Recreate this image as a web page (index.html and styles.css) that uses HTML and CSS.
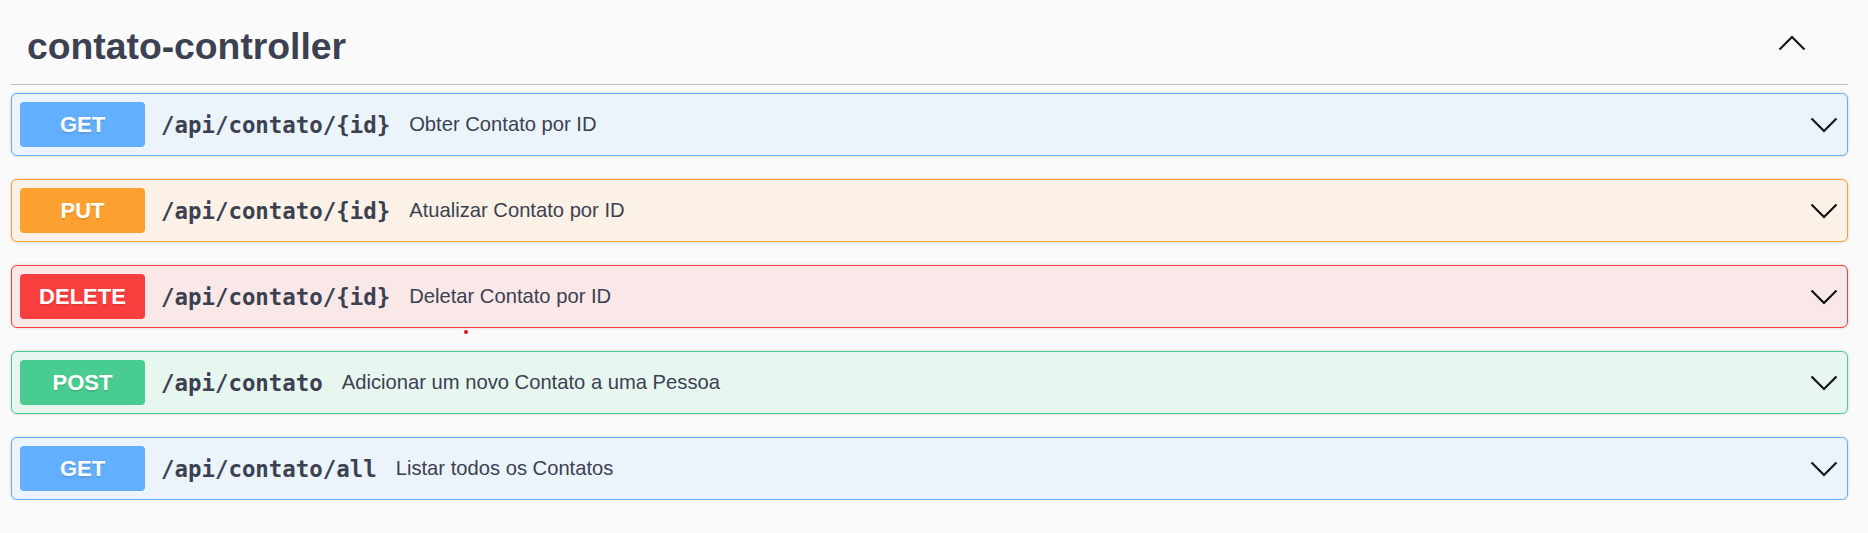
FILE: index.html
```html
<!DOCTYPE html>
<html lang="pt">
<head>
<meta charset="utf-8">
<title>contato-controller</title>
<link rel="stylesheet" href="styles.css">
</head>
<body>
<div class="section">
  <div class="tag-header">
    <h3 class="tag-title">contato-controller</h3>
    <button class="toggle" aria-label="Recolher">
      <svg width="28" height="16" viewBox="0 0 28 16"><polyline points="1.5,14.5 14,2 26.5,14.5" fill="none" stroke="#111" stroke-width="2.2"/></svg>
    </button>
  </div>
  <div class="ops">
    <div class="op op-get">
      <span class="method">GET</span>
      <span class="path">/api/contato/{id}</span>
      <span class="desc">Obter Contato por ID</span>
      <svg class="arrow" width="28" height="16" viewBox="0 0 28 16"><polyline points="1.5,1.5 14,14 26.5,1.5" fill="none" stroke="#111" stroke-width="2.2"/></svg>
    </div>
    <div class="op op-put">
      <span class="method">PUT</span>
      <span class="path">/api/contato/{id}</span>
      <span class="desc">Atualizar Contato por ID</span>
      <svg class="arrow" width="28" height="16" viewBox="0 0 28 16"><polyline points="1.5,1.5 14,14 26.5,1.5" fill="none" stroke="#111" stroke-width="2.2"/></svg>
    </div>
    <div class="op op-delete">
      <span class="method">DELETE</span>
      <span class="path">/api/contato/{id}</span>
      <span class="desc">Deletar Contato por ID</span>
      <svg class="arrow" width="28" height="16" viewBox="0 0 28 16"><polyline points="1.5,1.5 14,14 26.5,1.5" fill="none" stroke="#111" stroke-width="2.2"/></svg>
    </div>
    <div class="op op-post">
      <span class="method">POST</span>
      <span class="path">/api/contato</span>
      <span class="desc">Adicionar um novo Contato a uma Pessoa</span>
      <svg class="arrow" width="28" height="16" viewBox="0 0 28 16"><polyline points="1.5,1.5 14,14 26.5,1.5" fill="none" stroke="#111" stroke-width="2.2"/></svg>
    </div>
    <div class="op op-get">
      <span class="method">GET</span>
      <span class="path">/api/contato/all</span>
      <span class="desc">Listar todos os Contatos</span>
      <svg class="arrow" width="28" height="16" viewBox="0 0 28 16"><polyline points="1.5,1.5 14,14 26.5,1.5" fill="none" stroke="#111" stroke-width="2.2"/></svg>
    </div>
  </div>
  <span class="dot"></span>
</div>
</body>
</html>
```
FILE: styles.css
```css
html, body {
  margin: 0;
  padding: 0;
  background: #fafafa;
  font-family: "Liberation Sans", Arial, sans-serif;
  color: #3b4151;
}

.section {
  position: relative;
  padding: 0 20px 0 11px;
}

.tag-header {
  display: flex;
  align-items: center;
  justify-content: space-between;
  box-sizing: border-box;
  height: 85px;
  padding: 7px 42px 0 16px;
  border-bottom: 1px solid rgba(59, 65, 81, 0.3);
}

.tag-title {
  margin: 0;
  font-size: 37.3px;
  line-height: 36px;
  font-weight: 700;
  color: #3b4151;
}

.toggle {
  display: flex;
  margin: 0 0 5px 0;
  padding: 0;
  border: 0;
  background: none;
  cursor: pointer;
}

.ops {
  display: flex;
  flex-direction: column;
  gap: 23px;
  margin-top: 8px;
}

.op {
  display: flex;
  align-items: center;
  box-sizing: border-box;
  height: 63px;
  padding: 0 9px 0 8px;
  border: 1px solid;
  border-radius: 6px;
  box-shadow: 0 0 3px rgba(0, 0, 0, 0.19);
}

.method {
  flex: 0 0 auto;
  width: 125px;
  height: 45px;
  display: flex;
  align-items: center;
  justify-content: center;
  border-radius: 4px;
  color: #fff;
  font-size: 22px;
  font-weight: 700;
  text-shadow: 0 1.5px 0 rgba(0, 0, 0, 0.1);
}

.path {
  flex: 0 0 auto;
  padding: 0 19px 0 16px;
  font-family: "DejaVu Sans Mono", "Liberation Mono", monospace;
  font-size: 22.4px;
  font-weight: 700;
  color: #3b4151;
}

.desc {
  flex: 1 1 auto;
  font-size: 20.2px;
  color: #3b4151;
}

.arrow {
  flex: 0 0 auto;
}

.op-get { background: #ebf3fb; border-color: #61affe; }
.op-get .method { background: #61affe; }

.op-put { background: #fbf1e6; border-color: #fca130; }
.op-put .method { background: #fca130; }

.op-delete { background: #fae7e7; border-color: #f93e3e; }
.op-delete .method { background: #f93e3e; }

.op-post { background: #e8f6f0; border-color: #49cc90; }
.op-post .method { background: #49cc90; }

.dot {
  position: absolute;
  left: 464px;
  top: 329.5px;
  width: 4px;
  height: 4px;
  border-radius: 50%;
  background: #e3131b;
}
```
